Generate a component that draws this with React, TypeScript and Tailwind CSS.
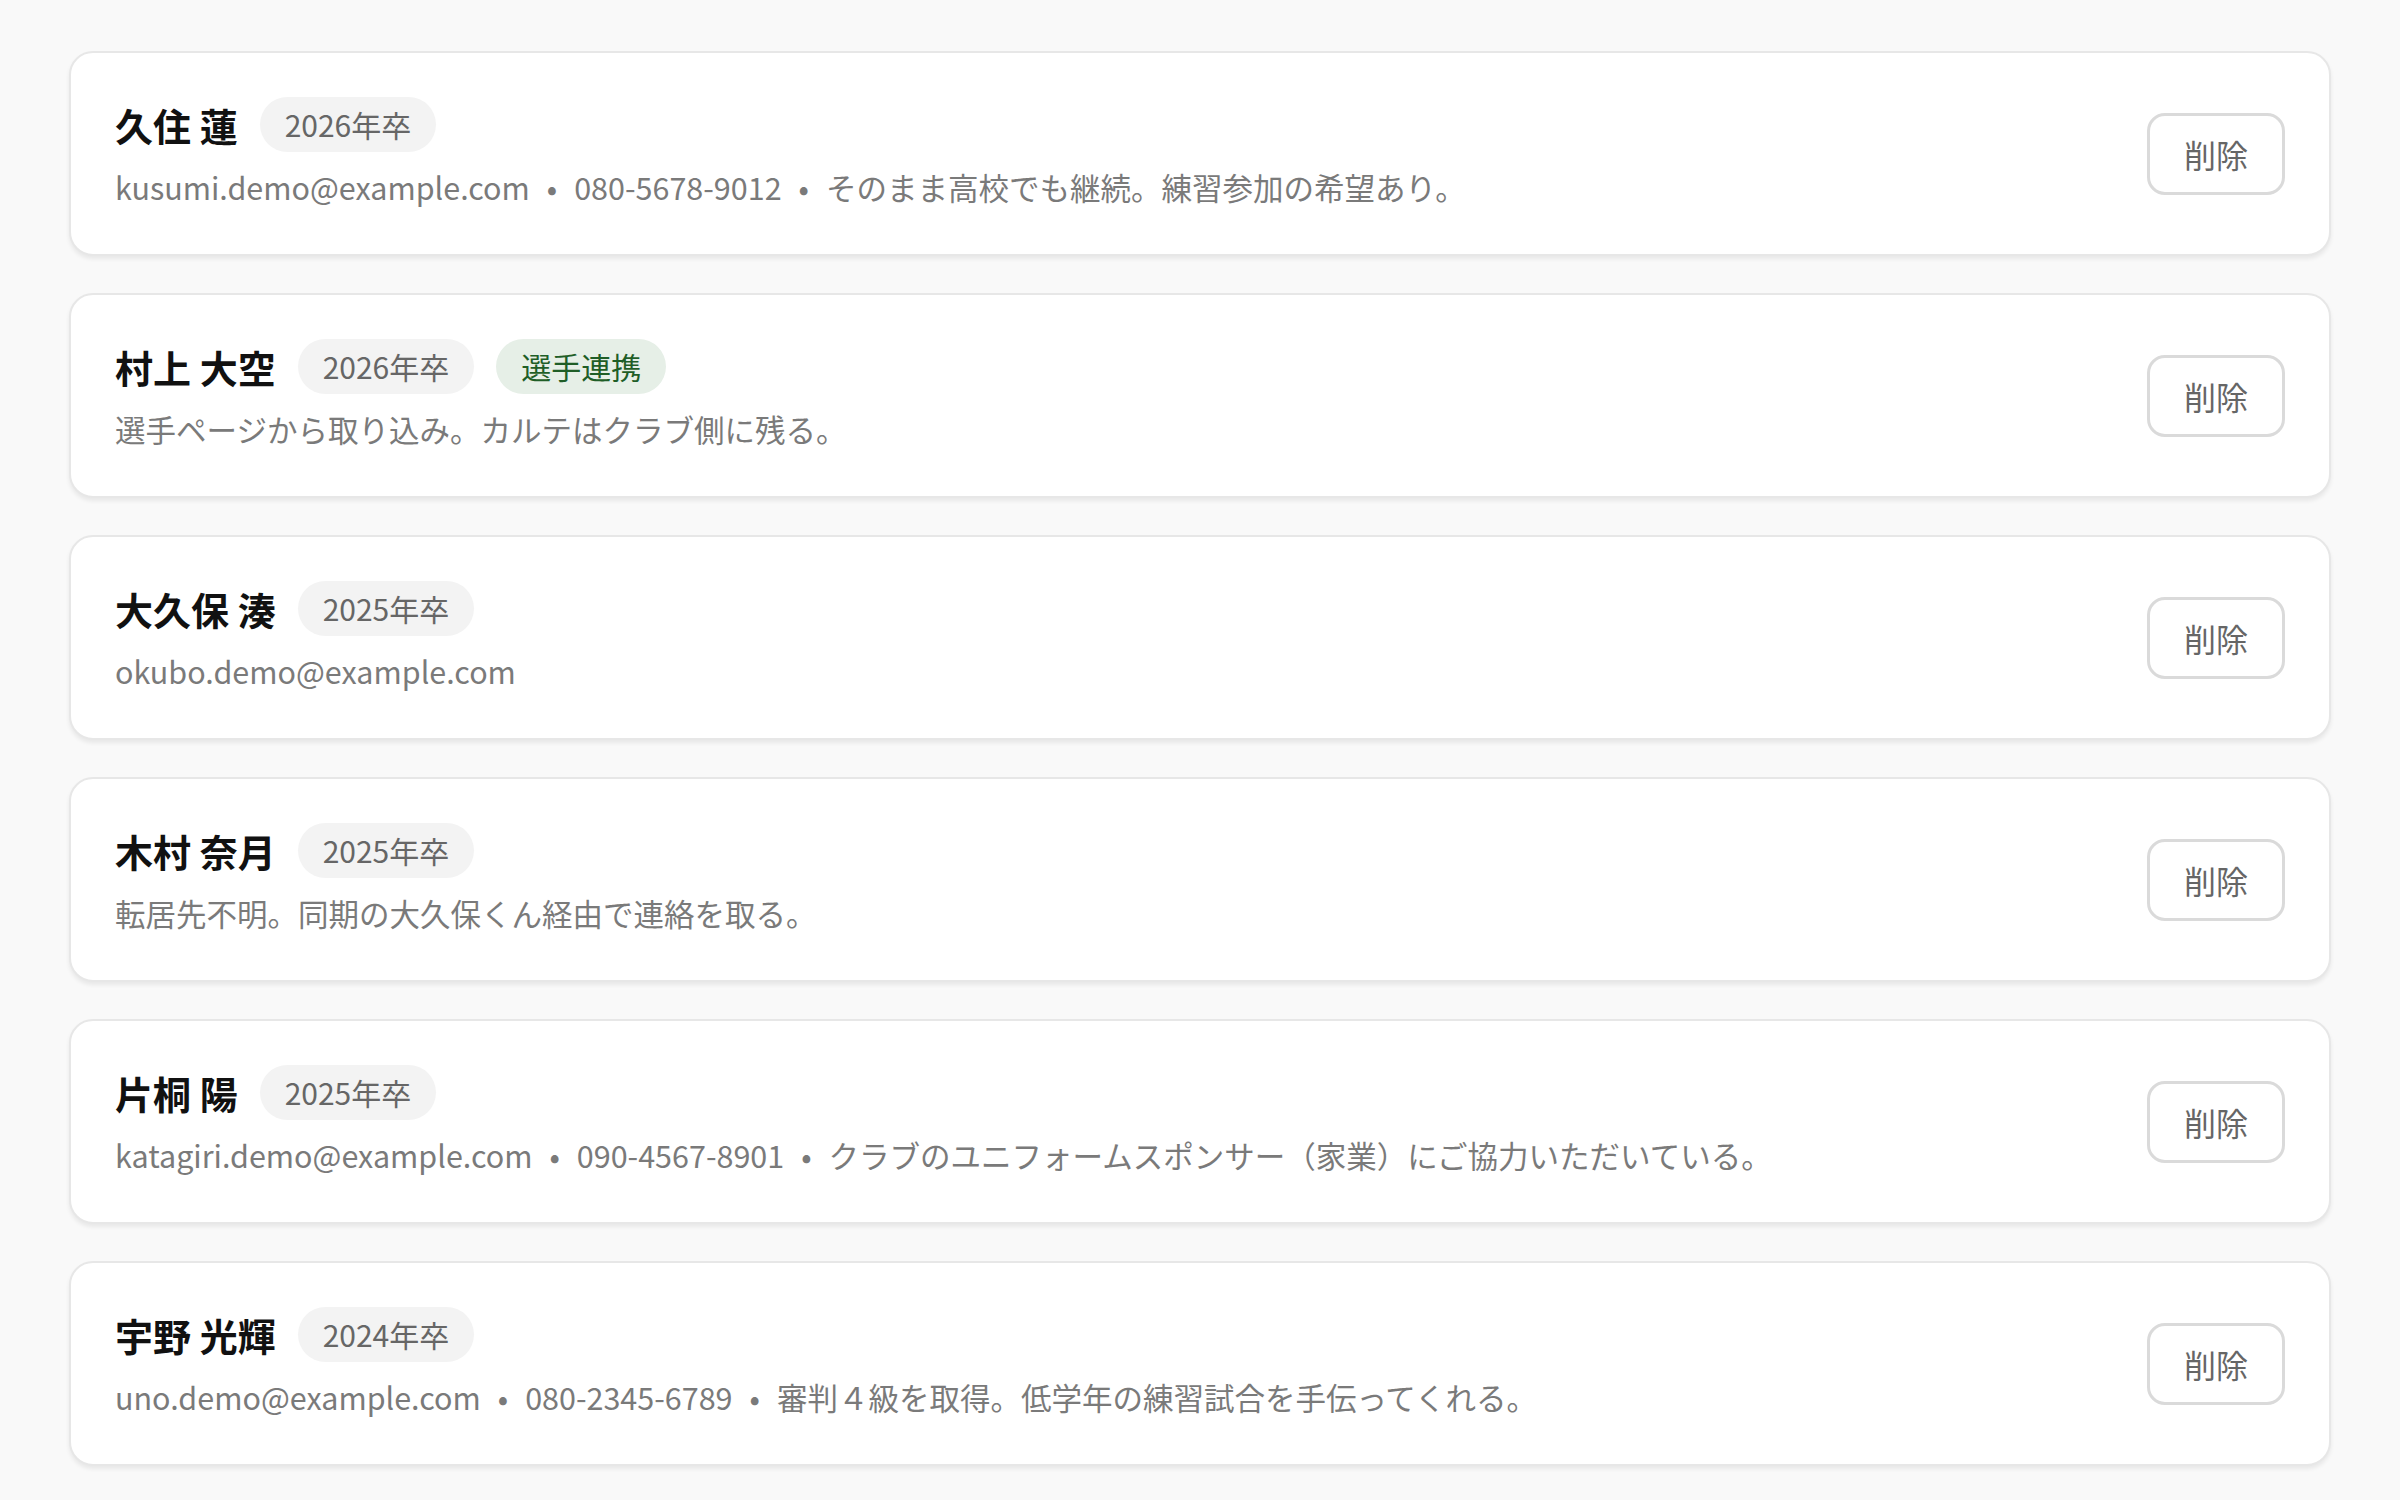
import React from 'react';

type Alumnus = {
  name: string;
  year: string;
  linked?: boolean;
  email?: string;
  phone?: string;
  note?: string;
};

const alumni: Alumnus[] = [
  { name: '久住 蓮', year: '2026年卒', email: 'kusumi.demo@example.com', phone: '080-5678-9012', note: 'そのまま高校でも継続。練習参加の希望あり。' },
  { name: '村上 大空', year: '2026年卒', linked: true, note: '選手ページから取り込み。カルテはクラブ側に残る。' },
  { name: '大久保 湊', year: '2025年卒', email: 'okubo.demo@example.com' },
  { name: '木村 奈月', year: '2025年卒', note: '転居先不明。同期の大久保くん経由で連絡を取る。' },
  { name: '片桐 陽', year: '2025年卒', email: 'katagiri.demo@example.com', phone: '090-4567-8901', note: 'クラブのユニフォームスポンサー（家業）にご協力いただいている。' },
  { name: '宇野 光輝', year: '2024年卒', email: 'uno.demo@example.com', phone: '080-2345-6789', note: '審判４級を取得。低学年の練習試合を手伝ってくれる。' },
];

function AlumnusCard({ a }: { a: Alumnus }) {
  const parts = [a.email, a.phone, a.note].filter(Boolean) as string[];
  return (
    <div className="flex items-center justify-between rounded-[24px] border-2 border-[#e7e7e7] bg-white px-[44px] py-[44px] shadow-[0_3px_4px_rgba(0,0,0,0.07)]">
      <div className="flex flex-col gap-[13px]">
        <div className="flex items-center gap-[22px]">
          <span className="text-[38px] font-bold leading-[55px] text-[#111]">{a.name}</span>
          <span className="flex h-[55px] items-center rounded-full bg-[#f3f3f3] px-[25px] text-[30px] text-[#666]">
            {a.year}
          </span>
          {a.linked && (
            <span className="flex h-[55px] items-center rounded-full bg-[#e6efe7] px-[25px] text-[30px] text-[#1f5e27]">
              選手連携
            </span>
          )}
        </div>
        <p className="text-[30.5px] leading-[45px] text-[#7a7a7a]">
          {parts.map((p, i) => (
            <React.Fragment key={i}>
              {i > 0 && <span className="mx-[17px] text-[#7a7a7a]">•</span>}
              {p}
            </React.Fragment>
          ))}
        </p>
      </div>
      <button className="h-[82px] rounded-[18px] border-[3px] border-[#dadada] bg-white px-[34px] text-[32px] text-[#666]">
        削除
      </button>
    </div>
  );
}

export default function App() {
  return (
    <div
      className="min-h-screen bg-[#f9f9f9] px-[69px] pt-[51px] pb-[40px]"
      style={{ fontFamily: '"Noto Sans CJK JP", "Noto Sans", sans-serif' }}
    >
      <div className="flex flex-col gap-[37px]">
        {alumni.map((a) => (
          <AlumnusCard key={a.name} a={a} />
        ))}
      </div>
    </div>
  );
}
